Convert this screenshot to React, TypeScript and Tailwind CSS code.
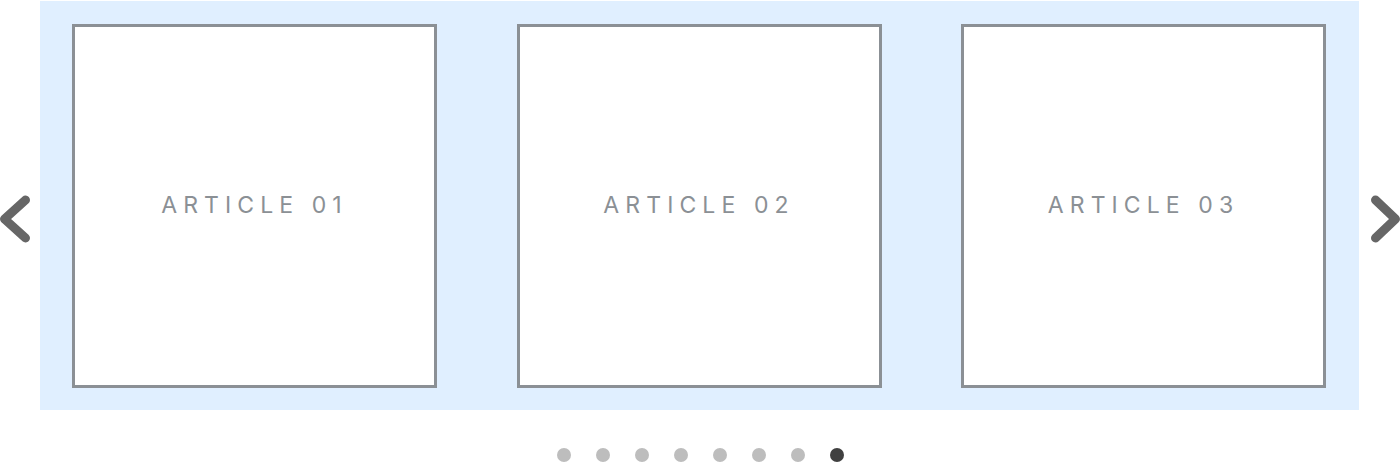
import React from "react";

const Chevron = ({ dir }: { dir: "left" | "right" }) => (
  <svg width="41" height="60" viewBox="0 0 41 60" className="block">
    {dir === "left" ? (
      <polyline points="25.5,11 4.5,30 25.5,49" fill="none" stroke="#666666" strokeWidth="9" strokeLinecap="round" strokeLinejoin="round" />
    ) : (
      <polyline points="16.5,11 36.5,30 16.5,49" fill="none" stroke="#666666" strokeWidth="9" strokeLinecap="round" strokeLinejoin="round" />
    )}
  </svg>
);

export default function App() {
  const cards = ["ARTICLE 01", "ARTICLE 02", "ARTICLE 03"];
  return (
    <div className="w-[1400px] h-[463px] bg-white pt-px" style={{ fontFamily: "Inter, 'Noto Sans', sans-serif" }}>
      <div className="flex items-center">
        <div className="w-[40px] mt-[26px]">
          <Chevron dir="left" />
        </div>
        <div className="w-[1319px] h-[409px] bg-[#e0efff] flex items-center justify-between pl-[32px] pr-[33px]">
          {cards.map((c) => (
            <div key={c} className="w-[365px] h-[364px] bg-white border-[3px] border-[#8b9095] flex items-center justify-center">
              <span className="text-[23px] tracking-[0.265em] text-[#8b9095]">{c}</span>
            </div>
          ))}
        </div>
        <div className="w-[41px] mt-[26px]">
          <Chevron dir="right" />
        </div>
      </div>
      <div className="flex justify-center gap-[25px] mt-[38px] pl-[1px]">
        {Array.from({ length: 8 }).map((_, i) => (
          <div key={i} className={`w-[14px] h-[14px] rounded-full ${i === 7 ? "bg-[#404040]" : "bg-[#bdbdbd]"}`} />
        ))}
      </div>
    </div>
  );
}
